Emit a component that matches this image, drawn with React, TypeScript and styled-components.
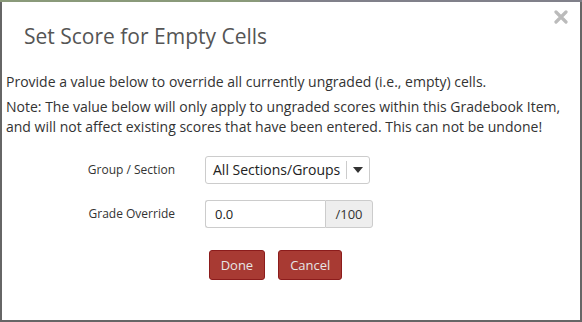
import React from "react";
import styled, { createGlobalStyle } from "styled-components";

const GlobalStyle = createGlobalStyle`
  html, body {
    margin: 0;
    padding: 0;
    background: #7d8a72;
  }
  body {
    font-family: "Open Sans", "Liberation Sans", sans-serif;
  }
`;

const Backdrop = styled.div`
  width: 582px;
  height: 322px;
  padding-top: 2px;
  box-sizing: border-box;
  background: linear-gradient(to right, #8a9a7a 0, #8a9a7a 260px, #80808a 260px);
`;

const Modal = styled.div`
  position: relative;
  height: 320px;
  box-sizing: border-box;
  background: #fff;
  border: 2px solid #666;
  border-top: none;
`;

const Header = styled.div`
  padding: 20px 22px 0;
  height: 58px;
  box-sizing: border-box;
`;

const Title = styled.h3`
  margin: 0;
  font-size: 21px;
  font-weight: 400;
  color: #555;
  line-height: 28px;
`;

const CloseButton = styled.button`
  position: absolute;
  top: 8px;
  right: 12px;
  border: none;
  background: none;
  padding: 0;
  cursor: pointer;
  display: flex;
`;

const Body = styled.div`
  padding: 12px 4px 0;
  color: #333;
  font-size: 14px;
  line-height: 20px;
`;

const Para = styled.p`
  margin: 0 0 5px;
`;

const Form = styled.div`
  display: grid;
  grid-template-columns: 169px auto;
  column-gap: 30px;
  row-gap: 16px;
  margin-top: 19px;
  align-items: center;
`;

const Label = styled.label`
  text-align: right;
  font-size: 12px;
  color: #333;
`;

const Select = styled.div`
  width: 165px;
  height: 28px;
  box-sizing: border-box;
  border: 1px solid #ccc;
  border-radius: 3px;
  display: flex;
  align-items: center;
  font-size: 14px;
  color: #222;
`;

const SelectText = styled.span`
  flex: 1;
  padding-left: 7px;
`;

const Caret = styled.span`
  width: 22px;
  height: 18px;
  border-left: 1px solid #ccc;
  display: flex;
  align-items: center;
  justify-content: center;
`;

const InputGroup = styled.div`
  display: flex;
  width: 168px;
  height: 28px;
`;

const Input = styled.div`
  flex: 1;
  box-sizing: border-box;
  border: 1px solid #ccc;
  border-right: none;
  border-radius: 3px 0 0 3px;
  padding-left: 9px;
  display: flex;
  align-items: center;
  font-size: 13px;
  color: #222;
`;

const Addon = styled.span`
  width: 48px;
  box-sizing: border-box;
  border: 1px solid #ccc;
  border-radius: 0 3px 3px 0;
  background: #eee;
  display: flex;
  align-items: center;
  justify-content: center;
  font-size: 13px;
  color: #333;
`;

const Actions = styled.div`
  display: flex;
  justify-content: center;
  gap: 13px;
  margin-top: 22px;
  padding-right: 31px;
`;

const Button = styled.button`
  height: 30px;
  padding: 0 11px;
  background: #a83a33;
  border: 1px solid #8c1c1c;
  border-radius: 3px;
  color: #e6e6e6;
  font-family: inherit;
  font-size: 13px;
  font-weight: 400;
`;

export default function App() {
  return (
    <>
      <GlobalStyle />
      <Backdrop>
        <Modal>
          <Header>
            <Title>Set Score for Empty Cells</Title>
          </Header>
          <CloseButton aria-label="Close">
            <svg width="14" height="14" viewBox="0 0 14 14">
              <path d="M2 2 L12 12 M12 2 L2 12" stroke="#bbb" strokeWidth="3.2" strokeLinecap="round" />
            </svg>
          </CloseButton>
          <Body>
            <Para>Provide a value below to override all currently ungraded (i.e., empty) cells.</Para>
            <Para>
              Note: The value below will only apply to ungraded scores within this Gradebook Item,
              and will not affect existing scores that have been entered. This can not be undone!
            </Para>
            <Form>
              <Label>Group / Section</Label>
              <Select>
                <SelectText>All Sections/Groups</SelectText>
                <Caret>
                  <svg width="10" height="6" viewBox="0 0 10 6">
                    <path d="M0 0 L10 0 L5 6 Z" fill="#333" />
                  </svg>
                </Caret>
              </Select>
              <Label>Grade Override</Label>
              <InputGroup>
                <Input>0.0</Input>
                <Addon>/100</Addon>
              </InputGroup>
            </Form>
            <Actions>
              <Button>Done</Button>
              <Button>Cancel</Button>
            </Actions>
          </Body>
        </Modal>
      </Backdrop>
    </>
  );
}
